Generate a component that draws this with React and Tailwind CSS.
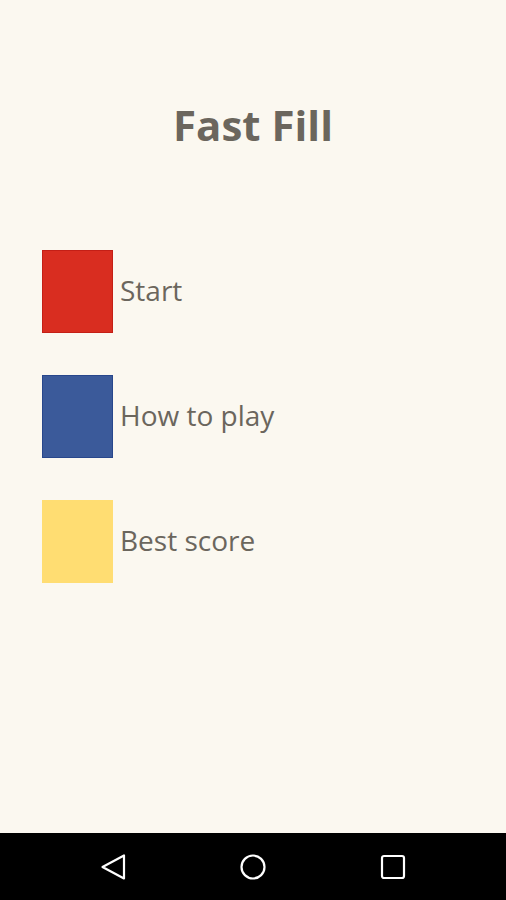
import React from 'react';

const items = [
  { label: 'Start', box: 'bg-[#d92d20] border-[#c41f16]' },
  { label: 'How to play', box: 'bg-[#3b5a9a] border-[#28478c]' },
  { label: 'Best score', box: 'bg-[#ffdd72] border-[#ffdd72]' },
];

const App = () => {
  return (
    <div className="w-[506px] h-[900px] flex flex-col bg-[#fbf8f0] font-['Open_Sans',sans-serif]">
      <div className="flex-1 flex flex-col">
        <h1 className="mt-[97px] text-center text-[42px] leading-[56px] font-bold text-[#6b665d]">
          Fast Fill
        </h1>

        {/* menu */}
        <div className="mt-[97px] ml-[42px] flex flex-col gap-[42px]">
          {items.map((item) => (
            <div key={item.label} className="flex items-center gap-[7px]">
              <div className={`w-[71px] h-[83px] border ${item.box}`} />
              <span className="mb-[4px] text-[28px] leading-[36px] text-[#6b665d]">{item.label}</span>
            </div>
          ))}
        </div>
      </div>

      {/* android nav bar */}
      <div className="h-[67px] bg-black flex items-center justify-center gap-[114px]">
        <svg width="26" height="26" viewBox="0 0 26 26" fill="none" stroke="#fff" strokeWidth="2.2" strokeLinejoin="round">
          <path d="M2.5 13 L24 1.5 L24 24.5 Z" />
        </svg>
        <svg width="26" height="26" viewBox="0 0 26 26" fill="none" stroke="#fff" strokeWidth="2.2">
          <circle cx="13" cy="13" r="11.5" />
        </svg>
        <svg width="26" height="26" viewBox="0 0 26 26" fill="none" stroke="#fff" strokeWidth="2.2">
          <rect x="2" y="2" width="22" height="22" rx="2" />
        </svg>
      </div>
    </div>
  );
};

export default App;
